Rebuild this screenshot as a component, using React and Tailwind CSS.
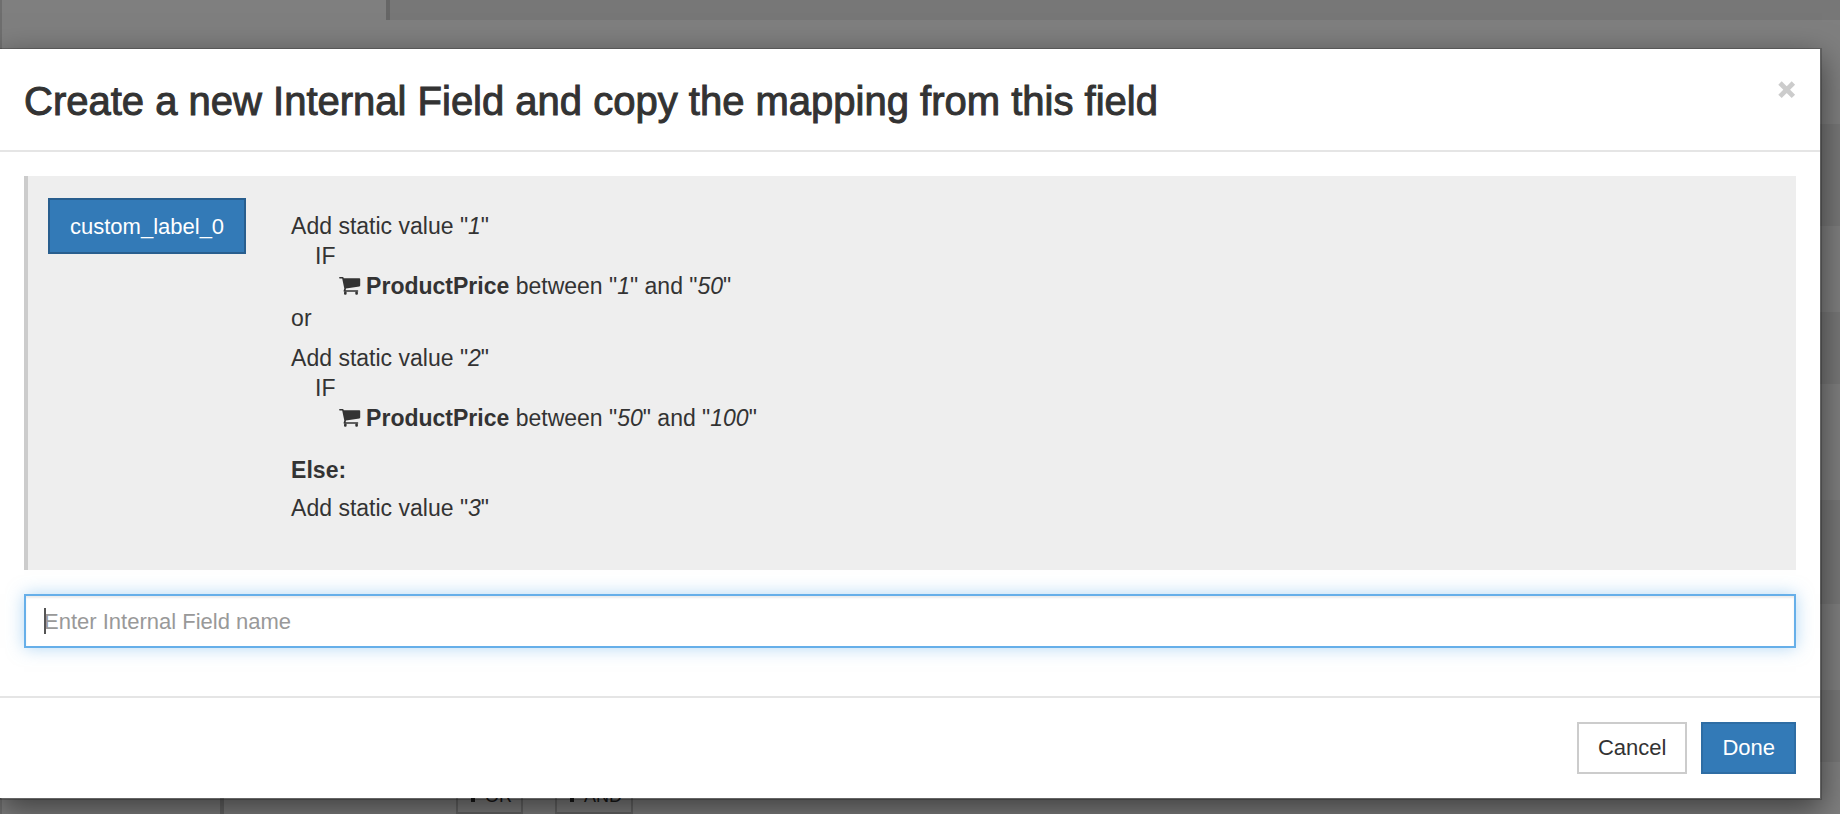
import React from 'react';

const rules = [
  { value: '1', from: '1', to: '50' },
  { value: '2', from: '50', to: '100' },
];

function CartIcon() {
  return (
    <svg width="22" height="18" viewBox="0 0 22 18" className="shrink-0" fill="currentColor" aria-hidden="true">
      <path d="M0.8 0 H3.6 Q4.5 0 4.8 1.2 H20.4 Q21.2 1.2 21.2 2 V8.6 Q21.2 9.3 20.4 9.5 L7 11.6 L6.6 13.3 H18.6 Q19.3 13.3 19.3 14 Q19.3 14.7 18.6 14.7 H5.2 Q4.4 14.7 4.6 13.8 L5.3 11.4 L3.2 1.5 H0.8 Q0.1 1.5 0.1 0.8 Q0.1 0 0.8 0 Z" />
      <rect x="5" y="14.4" width="2.6" height="3.4" rx="1.1" />
      <rect x="16.3" y="14.4" width="2.6" height="3.4" rx="1.1" />
    </svg>
  );
}

function PlusIcon() {
  return (
    <svg width="12" height="12" viewBox="0 0 12 12" className="shrink-0" fill="currentColor" aria-hidden="true">
      <path d="M4 0 H8 V4 H12 V7.6 H8 V12 H4 V7.6 H0 V4 H4 Z" />
    </svg>
  );
}

function Quoted({ children }) {
  return <>"<em>{children}</em>"</>;
}

function Rule({ value, from, to }) {
  return (
    <div>
      <p>Add static value <Quoted>{value}</Quoted></p>
      <p className="pl-6">IF</p>
      <p className="pl-12 flex items-center gap-[5px]">
        <CartIcon />
        <span>
          <b>ProductPrice</b> between <Quoted>{from}</Quoted> and <Quoted>{to}</Quoted>
        </span>
      </p>
    </div>
  );
}

function AddButton({ children }) {
  return (
    <button type="button" className="h-9 px-[9px] flex items-center gap-1.5 border-2 border-[#ccc] text-lg leading-6">
      <PlusIcon />
      {children}
    </button>
  );
}

// The mapping list that stays visible, dimmed, behind the dialog
function MappingList() {
  return (
    <div className="min-h-screen flex flex-col border-l-2 border-[#ddd] bg-white" inert>
      <div className="h-5 ml-96 border-l-4 border-[#ccc] bg-[#eee]" />
      <div className="h-[104px]" />
      <div className="h-[102px] bg-[#eee]" />
      <div className="h-[86px]" />
      <div className="h-[72px] bg-[#eee]" />
      <div className="h-[116px]" />
      <div className="h-[104px] bg-[#eee]" />
      <div className="h-[86px]" />
      <div className="h-[72px] bg-[#eee]" />
      <div className="flex grow">
        <div className="w-[222px] border-r-4 border-[#ccc]" />
        <div className="pt-4 pl-[232px] flex items-start gap-8">
          <AddButton>OR</AddButton>
          <AddButton>AND</AddButton>
        </div>
      </div>
    </div>
  );
}

export default function App() {
  return (
    <div className="relative h-screen overflow-hidden font-['Liberation_Sans',Arial,sans-serif] text-[22px] leading-[30px] text-[#333]">
      <MappingList />
      <div className="absolute inset-0 bg-black/50 pt-12 pr-[18px]">
        <div
          role="dialog"
          aria-labelledby="dialog-title"
          className="bg-white bg-clip-padding border-t border-r-2 border-b-2 border-black/20 shadow-[0_10px_30px_rgba(0,0,0,0.5)]"
        >
          <header className="flex items-start justify-between pl-6 pr-6 pt-7 pb-6 border-b-2 border-[#e5e5e5]">
            <h1 id="dialog-title" className="text-[40px] leading-[49px] font-medium [-webkit-text-stroke:1px_#333]">
              Create a new Internal Field and copy the mapping from this field
            </h1>
            <button type="button" aria-label="Close" className="mt-1 text-[#ccc]">
              <svg width="18" height="18" viewBox="0 0 18 18" fill="none" stroke="currentColor" strokeWidth="4.8">
                <path d="M2 2 L15.4 15.4 M15.4 2 L2 15.4" />
              </svg>
            </button>
          </header>

          <div className="px-6 pt-6 pb-12">
            <section className="flex items-start gap-[45px] mb-6 pl-5 pt-[22px] pb-[47px] border-l-4 border-[#ccc] bg-[#eee]">
              <button type="button" className="h-14 px-5 pt-0.5 border-2 border-[#285e8e] bg-[#337ab7] text-white">
                custom_label_0
              </button>
              <div className="pt-[13px] text-[23px]">
                <Rule {...rules[0]} />
                <p className="pt-0.5 pb-2.5">or</p>
                <Rule {...rules[1]} />
                <p className="pt-[22px] pb-2"><b>Else:</b></p>
                <p>Add static value <Quoted>3</Quoted></p>
              </div>
            </section>

            <div className="relative">
              <input
                type="text"
                aria-label="Internal Field name"
                placeholder="Enter Internal Field name"
                className="block w-full h-[54px] px-[18px] pt-0.5 border-2 border-[#66afe9] bg-white outline-none placeholder:text-[#999] shadow-[inset_0_2px_2px_rgba(0,0,0,0.075),0_0_16px_rgba(102,175,233,0.5)]"
              />
              <span className="absolute left-5 top-3.5 w-0.5 h-[26px] bg-[#555]" />
            </div>
          </div>

          <footer className="flex justify-end gap-3.5 px-6 py-6 border-t-2 border-[#e5e5e5]">
            <button type="button" className="h-[52px] px-[19px] border-2 border-[#ccc] bg-white">Cancel</button>
            <button type="button" className="h-[52px] px-[19px] border-2 border-[#2e6da4] bg-[#337ab7] text-white">Done</button>
          </footer>
        </div>
      </div>
    </div>
  );
}
